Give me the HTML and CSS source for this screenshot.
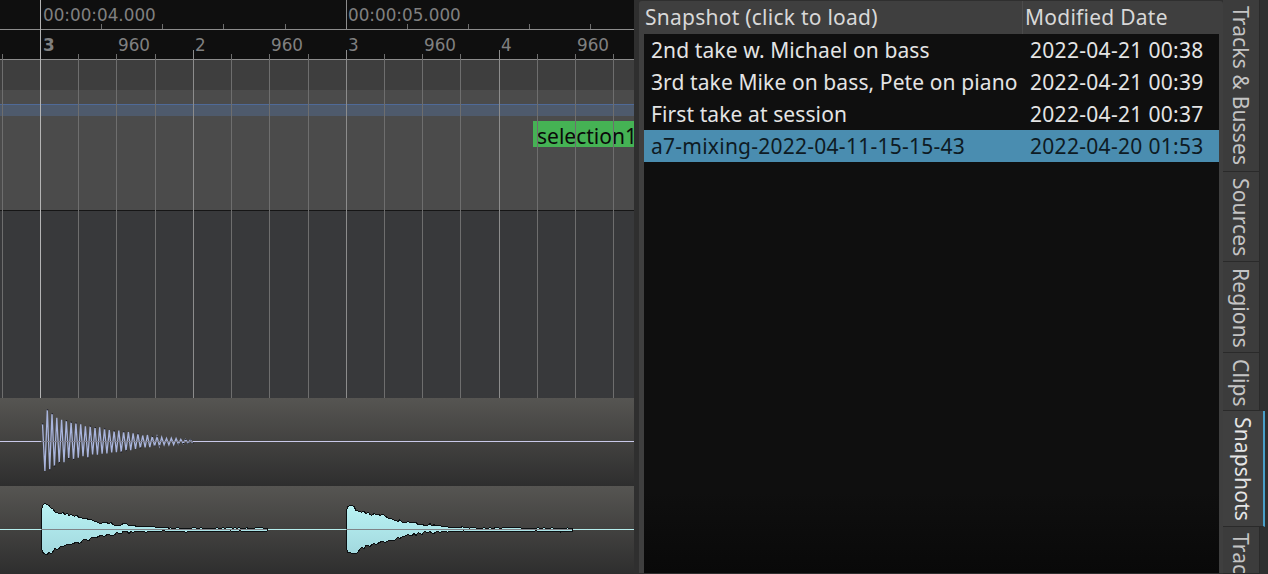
FILE: index.html
```html
<!DOCTYPE html>
<html>
<head>
    <title>Snapshots</title>
    <link rel="stylesheet" href="styles.css">
</head>
<body>
    <div class="editor">
        <div class="ruler timecode">
            <span class="tick-label" style="left: 43px">00:00:04.000</span>
            <span class="tick-label" style="left: 348px">00:00:05.000</span>
        </div>
        <div class="ruler bars">
            <span class="tick-label strong" style="left: 43px">3</span>
            <span class="tick-label" style="left: 118px">960</span>
            <span class="tick-label" style="left: 195px">2</span>
            <span class="tick-label" style="left: 271px">960</span>
            <span class="tick-label" style="left: 348px">3</span>
            <span class="tick-label" style="left: 424px">960</span>
            <span class="tick-label" style="left: 501px">4</span>
            <span class="tick-label" style="left: 577px">960</span>
        </div>
        <div class="marker-row"></div>
        <div class="range-row">
            <div class="range-band"></div>
            <div class="selection-marker">selection1</div>
        </div>
        <div class="empty-row"></div>
        <div class="track track-purple">
            <svg id="wave-purple" class="wave" width="634" height="88"></svg>
        </div>
        <div class="track track-cyan">
            <svg id="wave-cyan" class="wave" width="634" height="88"></svg>
        </div>
        <svg id="grid" class="grid" width="634" height="398"></svg>
    </div>

    <div class="snapshots">
        <div class="list-head">
            <div class="col-name">Snapshot (click to load)</div>
            <div class="col-date">Modified Date</div>
        </div>
        <div class="list">
            <div class="row"><span class="name">2nd take w. Michael on bass</span><span class="date">2022-04-21 00:38</span></div>
            <div class="row"><span class="name">3rd take Mike on bass, Pete on piano</span><span class="date">2022-04-21 00:39</span></div>
            <div class="row"><span class="name">First take at session</span><span class="date">2022-04-21 00:37</span></div>
            <div class="row selected"><span class="name digits">a7-mixing-2022-04-11-15-15-43</span><span class="date">2022-04-20 01:53</span></div>
        </div>
    </div>

    <div class="tabs">
        <div class="tab tab-tracks">Tracks &amp; Busses</div>
        <div class="tab tab-sources">Sources</div>
        <div class="tab tab-regions">Regions</div>
        <div class="tab tab-clips">Clips</div>
        <div class="tab tab-snapshots active">Snapshots</div>
        <div class="tab tab-last">Trac</div>
    </div>

    <script src="waves.js"></script>
</body>
</html>
```

FILE: styles.css
```css
html, body {
    margin: 0;
    height: 574px;
    overflow: hidden;
}
body {
    display: flex;
    background-color: #2f2f2f;
    font-family: "Noto Sans", sans-serif;
    font-size: 21px;
}

/* timeline */
.editor {
    position: relative;
    width: 634px;
    flex: none;
    overflow: hidden;
}
.ruler {
    position: relative;
    background-color: #0f0f0f;
    border-bottom: 1px solid #8c8c8c;
}
.timecode {
    height: 29px;
}
.bars {
    height: 29px;
}
.tick-label {
    position: absolute;
    top: 5px;
    font-family: "DejaVu Sans", sans-serif;
    font-size: 16.8px;
    line-height: 20px;
    color: #808080;
}
.tick-label.strong {
    font-weight: bold;
}
.marker-row {
    height: 30px;
    background-color: #3e3e3e;
}
.range-row {
    position: relative;
    height: 120px;
    background-color: #4b4b4b;
    border-bottom: 1px solid #161616;
}
.range-band {
    position: absolute;
    top: 14px;
    left: 0;
    right: 0;
    height: 11px;
    background-color: #4e5a6c;
    border-top: 1px solid #4f6a98;
}
.selection-marker {
    position: absolute;
    top: 31px;
    left: 533px;
    width: 97px;
    height: 26px;
    padding-left: 4px;
    overflow: hidden;
    white-space: nowrap;
    background-color: #45b254;
    color: #0a0a0a;
    line-height: 30px;
}
.empty-row {
    height: 187px;
    background-color: #38393b;
}
.track {
    height: 88px;
    background: linear-gradient(#565552, #2e2e2e);
}
.wave {
    display: block;
}
.grid {
    position: absolute;
    top: 0;
    left: 0;
}
.grid line {
    stroke: #6e6e6e;
    stroke-width: 1;
    shape-rendering: crispEdges;
}
.grid line.major {
    stroke: #8c8c8c;
}
.grid line.first {
    stroke: #b4b4b4;
}

/* snapshot list */
.snapshots {
    width: 575px;
    height: 572px;
    flex: none;
    margin: 1px 0 1px 5px;
    padding-left: 5px;
    padding-right: 4px;
    background-color: #3f3f3f;
    border-radius: 3px 3px 0 0;
    display: flex;
    flex-direction: column;
    color: #e4e4e4;
}
.list-head {
    height: 33px;
    flex: none;
    display: flex;
    color: #d8d8d8;
    line-height: 33px;
    letter-spacing: 0.25px;
}
.col-name {
    width: 377px;
    padding-left: 1px;
    border-right: 1px solid #4c4c4c;
}
.col-date {
    padding-left: 2px;
}
.list {
    flex: 1;
    background: linear-gradient(#0f0f0f 85%, #090909);
}
.row {
    display: flex;
    height: 32px;
    line-height: 32px;
    white-space: nowrap;
}
.name {
    width: 379px;
    padding-left: 7px;
    letter-spacing: 0.1px;
}
.name.digits {
    letter-spacing: 0.25px;
}
.date {
    letter-spacing: 0.3px;
}
.row.selected {
    background-color: #4a8db0;
    color: #0e1b24;
}

/* vertical tabs */
.tabs {
    width: 45px;
    flex: none;
    display: flex;
    flex-direction: column;
}
.tab {
    width: 37px;
    box-sizing: border-box;
    padding-top: 6px;
    background-color: #3c3c3c;
    border-right: 1px solid #2a2a2a;
    border-bottom: 1px solid #2a2a2a;
    writing-mode: vertical-rl;
    line-height: 36px;
    letter-spacing: 0.15px;
    color: #c4c4c4;
    white-space: nowrap;
    overflow: hidden;
}
.tab-tracks {
    height: 172px;
}
.tab-sources {
    height: 90px;
}
.tab-regions {
    height: 91px;
}
.tab-clips {
    height: 58px;
}
.tab-snapshots {
    height: 116px;
}
.tab-last {
    height: 47px;
}
.tab.active {
    width: 42px;
    background-color: #404040;
    border-right: 2px solid #4a9fc8;
    line-height: 40px;
    color: #e6e6e6;
}
```

FILE: waves.js
```js
const NS = 'http://www.w3.org/2000/svg';

function add(svg, tag, attrs) {
    const el = document.createElementNS(NS, tag);
    for (const k in attrs) el.setAttribute(k, attrs[k]);
    svg.appendChild(el);
    return el;
}

// cheap repeatable noise so the waveforms look the same on every load
let seed = 7;
function noise() {
    seed = (seed * 16807) % 2147483647;
    return seed / 2147483647 - 0.5;
}

function lerp(points, x) {
    for (let i = 1; i < points.length; i++) {
        if (x <= points[i][0]) {
            const a = points[i - 1], b = points[i];
            return a[1] + (b[1] - a[1]) * (x - a[0]) / (b[0] - a[0]);
        }
    }
    return points[points.length - 1][1];
}

// grid lines
const grid = document.getElementById('grid');
const xs = [2, 40, 78, 116, 155, 193, 231, 269, 308, 346, 384, 422, 460, 499, 537, 575, 613];
xs.forEach((x, i) => {
    let cls = '', top = 54;
    if (i % 4 === 1) { cls = 'major'; top = 50; }
    if (x === 40) { cls = 'first'; top = 0; }
    add(grid, 'line', { x1: x + 0.5, x2: x + 0.5, y1: top, y2: 398, class: cls });
    if (x === 346) add(grid, 'line', { x1: x + 0.5, x2: x + 0.5, y1: 0, y2: 29, class: 'major' });
});
[101, 162, 223, 285, 407, 468, 529, 590].forEach(x => {
    add(grid, 'line', { x1: x + 0.5, x2: x + 0.5, y1: 24, y2: 29 });
});

// purple track: decaying oscillation
const purple = document.getElementById('wave-purple');
const mid = 43.5;
add(purple, 'line', { x1: 0, x2: 634, y1: mid, y2: mid, stroke: '#c9c9ea', 'stroke-width': 1 });
const env = [[41, 8], [44, 31], [49, 30], [55, 23], [70, 18], [100, 13], [130, 8.5], [160, 4], [193, 1.5]];
let line = '', tips = '';
for (let x = 42.5, up = true; x < 193; x += 2.385, up = !up) {
    const a = lerp(env, x) * (1 + noise() * 0.2);
    const y = mid + (up ? -a : a);
    line += (line ? ' L' : 'M') + x.toFixed(1) + ' ' + y.toFixed(1);
    if (noise() > 0) tips += 'M' + (x - 0.5).toFixed(1) + ' ' + y.toFixed(1) + 'h1.4';
}
add(purple, 'path', { d: line, fill: 'none', stroke: '#a9b5dd', 'stroke-width': 1.3 });
add(purple, 'path', { d: tips, fill: 'none', stroke: '#14141c', 'stroke-width': 1 });
add(purple, 'line', { x1: 41, x2: 193, y1: mid, y2: mid, stroke: '#7f8090', 'stroke-width': 1 });

// cyan track: filled envelope, same hit twice
const cyan = document.getElementById('wave-cyan');
const centre = 43.5;
const defs = add(cyan, 'defs', {});
const grad = add(defs, 'linearGradient', { id: 'cyan-fill', x1: 0, x2: 0, y1: 0, y2: 1 });
add(grad, 'stop', { offset: 0, 'stop-color': '#b9f3f4' });
add(grad, 'stop', { offset: 1, 'stop-color': '#a2d8de' });
add(cyan, 'line', { x1: 0, x2: 634, y1: centre, y2: centre, stroke: '#b6eeee', 'stroke-width': 1 });

const upper = [[0, 18], [2, 24], [7, 26], [10, 20], [19, 17], [39, 13], [59, 7], [79, 5], [99, 3], [130, 1.5], [226, 1.5]];
const lower = [[0, 18], [2, 23], [7, 25], [10, 23], [19, 17], [30, 15], [39, 12], [59, 7], [79, 3.5], [99, 2], [226, 2]];

function hit(x0) {
    let top = '', bot = '';
    for (let i = 0; i <= 226; i += 2) {
        const wob = i < 90 ? 3 : 1.2;
        top += 'L' + (x0 + i) + ' ' + (centre - lerp(upper, i) + noise() * wob).toFixed(1);
        bot = 'L' + (x0 + i) + ' ' + (centre + lerp(lower, i) + noise() * wob).toFixed(1) + bot;
    }
    add(cyan, 'path', {
        d: 'M' + x0 + ' ' + centre + top + bot + 'Z',
        fill: 'url(#cyan-fill)', stroke: '#0c1012', 'stroke-width': 1,
        'shape-rendering': 'crispEdges'
    });
    add(cyan, 'line', { x1: x0, x2: x0 + 226, y1: centre, y2: centre, stroke: '#7f8488', 'stroke-width': 1 });
}
hit(41);
hit(346);
```
